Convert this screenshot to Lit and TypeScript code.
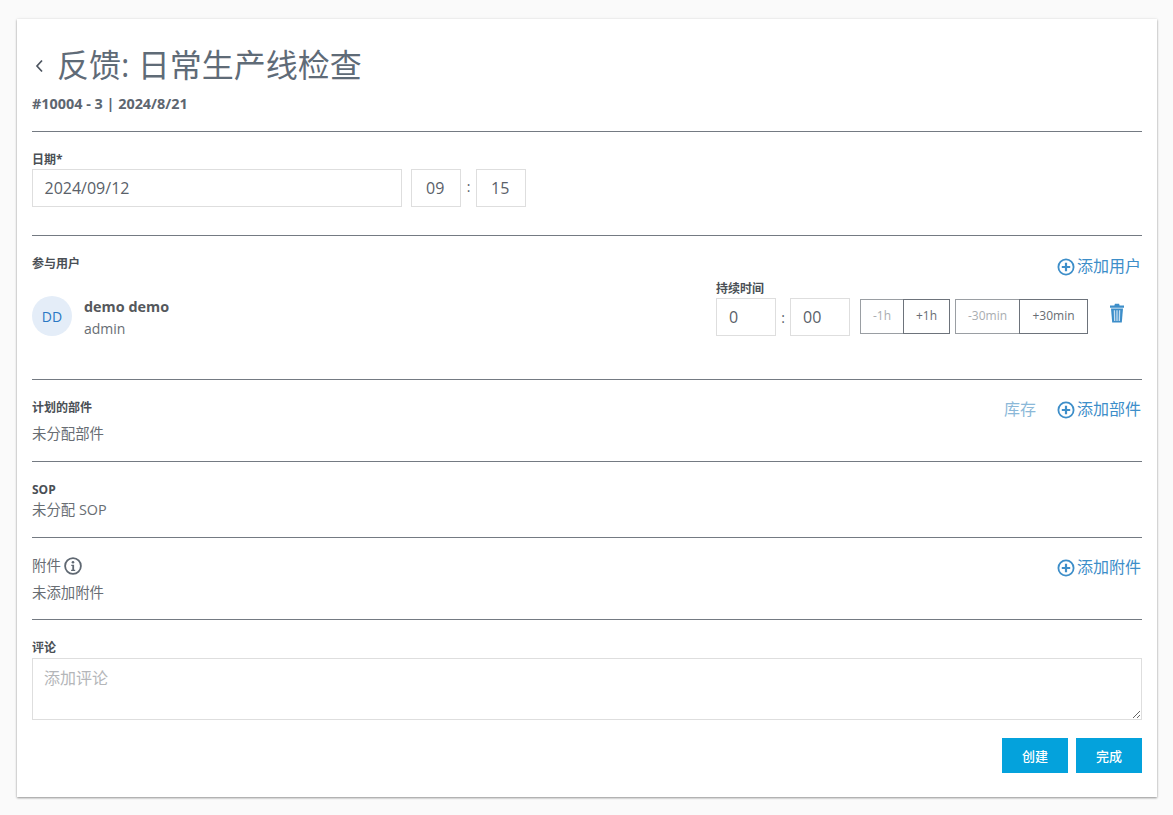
import { LitElement, css, html } from 'lit';
import { customElement } from 'lit/decorators.js';

const plusIcon = html`<svg class="plus" viewBox="0 0 18 18" width="18" height="18">
  <circle cx="9" cy="9" r="7.6" fill="none" stroke="currentColor" stroke-width="1.8"></circle>
  <path d="M9 4.8v8.4M4.8 9h8.4" fill="none" stroke="currentColor" stroke-width="2.2"></path>
</svg>`;

@customElement('app-root')
export class AppRoot extends LitElement {
  private addLink(label: string) {
    return html`<a class="add">${plusIcon}<span>${label}</span></a>`;
  }

  override render() {
    return html`
      <main class="card">
        <header class="head">
          <div class="title-row">
            <svg class="back" viewBox="0 0 10 14" width="10" height="14">
              <path d="M8 1.5 3 7l5 5.5" fill="none" stroke="#4d5560" stroke-width="1.7"></path>
            </svg>
            <h1>反馈: 日常生产线检查</h1>
          </div>
          <div class="sub">#10004 - 3 | 2024/8/21</div>
        </header>

        <section class="date">
          <label class="lbl">日期*</label>
          <div class="date-row">
            <div class="field date-field">2024/09/12</div>
            <div class="field time">09</div>
            <span class="colon">:</span>
            <div class="field time">15</div>
          </div>
        </section>

        <section class="users">
          <div class="users-head">
            <label class="lbl">参与用户</label>
            ${this.addLink('添加用户')}
          </div>
          <div class="user-row">
            <div class="avatar">DD</div>
            <div class="who">
              <div class="name">demo demo</div>
              <div class="role">admin</div>
            </div>
            <div class="duration">
              <label class="lbl">持续时间</label>
              <div class="duration-row">
                <div class="field dur">0</div>
                <span class="colon dur-colon">:</span>
                <div class="field dur">00</div>
                <div class="steps first">
                  <span class="step off s1">-1h</span><span class="step s2">+1h</span>
                </div>
                <div class="steps">
                  <span class="step off s3">-30min</span><span class="step s4">+30min</span>
                </div>
              </div>
            </div>
            <svg class="trash" viewBox="0 0 16 20" width="16" height="20">
              <path d="M1 2.6h14v2.2H1zM5.4 2.6l.5-1.8h4.2l.5 1.8z" fill="#3d8ec9"></path>
              <path d="M2 5.4h12L12.8 19.6H3.2z" fill="#3d8ec9"></path>
              <path d="M5.4 7.2l.3 10.8M8 7.2V18M10.6 7.2l-.3 10.8" stroke="#c6def1" stroke-width="1.3" fill="none"></path>
            </svg>
          </div>
        </section>

        <section class="parts">
          <div class="parts-head">
            <label class="lbl">计划的部件</label>
            <div class="actions">
              <a class="stock">库存</a>
              ${this.addLink('添加部件')}
            </div>
          </div>
          <div class="txt parts-txt">未分配部件</div>
        </section>

        <section class="sop">
          <label class="lbl">SOP</label>
          <div class="txt">未分配 SOP</div>
        </section>

        <section class="files">
          <div class="files-head">
            <span class="files-lbl">附件
              <svg viewBox="0 0 18 18" width="18" height="18">
                <circle cx="9" cy="9" r="7.9" fill="none" stroke="#5f6872" stroke-width="1.8"></circle>
                <circle cx="9" cy="5.2" r="1.3" fill="#5f6872"></circle>
                <path d="M7.3 7.7h2.8v5h1.1v1.2H7.1v-1.2h1.2V8.9h-1z" fill="#5f6872"></path>
              </svg>
            </span>
            ${this.addLink('添加附件')}
          </div>
          <div class="txt files-txt">未添加附件</div>
        </section>

        <section class="comment">
          <label class="lbl">评论</label>
          <textarea placeholder="添加评论"></textarea>
          <div class="buttons">
            <button type="button">创建</button>
            <button type="button">完成</button>
          </div>
        </section>
      </main>
    `;
  }

  static override styles = css`
    :host {
      display: block;
      height: 815px;
      box-sizing: border-box;
      padding: 19px 16px 0 17px;
      background: #fafafa;
      font-family: 'Open Sans', 'Noto Sans CJK SC', sans-serif;
      color: #5a6169;
    }

    * {
      box-sizing: border-box;
    }

    .card {
      height: 778px;
      padding: 0 15px;
      background: #ffffff;
      box-shadow: 0 1px 2px rgba(0, 0, 0, 0.4), 0 0 4px rgba(0, 0, 0, 0.06);
    }

    section,
    .head {
      border-bottom: 1px solid #747a82;
    }

    .head {
      height: 113px;
      padding-top: 23px;
    }

    .title-row {
      display: flex;
      align-items: center;
      height: 46px;
    }

    .back {
      margin: 1px 13px 0 2px;
    }

    h1 {
      margin: 0;
      font-size: 32px;
      line-height: 46px;
      font-weight: 400;
      color: #5f6b77;
    }

    .sub {
      margin-top: 6px;
      font-size: 14.4px;
      line-height: 20px;
      font-weight: 700;
      color: #5d6670;
    }

    .lbl {
      display: block;
      margin: 1px 0 -1px;
      font-size: 12px;
      line-height: 16px;
      font-weight: 700;
      color: #4a4f55;
    }

    .field {
      display: flex;
      align-items: center;
      height: 38px;
      padding-left: 12px;
      border: 1px solid #dedede;
      font-size: 16px;
      color: #5a6169;
    }

    .date {
      height: 104px;
      padding-top: 19px;
    }

    .date-row {
      display: flex;
      margin-top: 2px;
    }

    .date-field {
      width: 370px;
      margin-right: 9px;
      padding-left: 11.5px;
    }

    .time {
      width: 50px;
      padding-left: 14px;
    }

    .colon {
      width: 15px;
      text-align: center;
      font-size: 14px;
      line-height: 36px;
    }

    .users {
      height: 144px;
      padding-top: 19px;
    }

    .users-head,
    .parts-head,
    .files-head {
      display: flex;
      justify-content: space-between;
      align-items: flex-start;
    }

    .add {
      display: flex;
      align-items: center;
      gap: 2px;
      margin-right: 1px;
      font-size: 16px;
      line-height: 22px;
      color: #3d8ec9;
    }

    .plus {
      flex: none;
      margin-top: 2px;
    }

    .files-head .add {
      margin-top: 2px;
    }

    .user-row {
      display: flex;
      margin-top: 3px;
    }

    .avatar {
      display: flex;
      align-items: center;
      justify-content: center;
      width: 40px;
      height: 40px;
      margin-top: 16px;
      border-radius: 50%;
      background: #e4edf8;
      color: #2a78c4;
      font-size: 14px;
    }

    .who {
      flex: none;
      width: 632px;
      margin-left: 12px;
      padding-top: 17px;
    }

    .name {
      font-size: 14.4px;
      line-height: 20px;
      font-weight: 700;
      color: #55585c;
    }

    .role {
      margin-top: 2px;
      font-size: 14px;
      line-height: 20px;
      color: #686d73;
    }

    .duration {
      width: 372px;
    }

    .duration-row {
      display: flex;
      align-items: flex-start;
      margin-top: 2px;
    }

    .dur {
      width: 60px;
      padding-left: 12px;
    }

    .dur-colon {
      width: 14px;
      line-height: 40px;
    }

    .steps {
      display: flex;
      margin: 1px 0 0 5px;
    }

    .steps.first {
      margin-left: 10px;
    }

    .step {
      display: flex;
      align-items: center;
      justify-content: center;
      height: 35px;
      padding-bottom: 2px;
      border: 1px solid #6d737b;
      font-size: 12px;
      color: #686d73;
    }

    .step.off {
      border-color: #9a9ea3;
      border-right: 0;
      color: #a9adb1;
    }

    .s1 { width: 43px; }
    .s2 { width: 47px; }
    .s3 { width: 64px; }
    .s4 { width: 69px; }

    .trash {
      margin: 23px 0 0 21px;
    }

    .parts {
      height: 82px;
      padding-top: 19px;
    }

    .actions {
      display: flex;
      gap: 21px;
      margin-top: -1px;
    }

    .stock {
      font-size: 16px;
      line-height: 22px;
      color: #8bb8d8;
    }

    .txt {
      font-size: 14.4px;
      line-height: 20px;
      color: #686d73;
    }

    .parts-txt {
      margin-top: 4px;
    }

    .sop {
      height: 76px;
      padding-top: 19px;
    }

    .sop .txt {
      margin-top: 3px;
    }

    .files {
      height: 82px;
      padding-top: 16px;
    }

    .files-lbl {
      display: flex;
      align-items: center;
      gap: 3px;
      font-size: 14.4px;
      line-height: 24px;
      color: #686d73;
    }

    .files-txt {
      margin-top: 5px;
    }

    .comment {
      border-bottom: 0;
      padding-top: 19px;
    }

    textarea {
      display: block;
      width: 100%;
      height: 62px;
      margin: 3px 0 0;
      padding: 6px 11px;
      border: 1px solid #dedede;
      border-radius: 0;
      outline: none;
      font: inherit;
      font-size: 16px;
      color: #5a6169;
    }

    textarea::placeholder {
      color: #b4b6b9;
      opacity: 1;
    }

    .buttons {
      display: flex;
      justify-content: flex-end;
      gap: 8px;
      margin-top: 18px;
    }

    button {
      width: 66px;
      height: 35px;
      border: 0;
      background: #04a2dc;
      color: #ffffff;
      font: inherit;
      font-size: 13px;
      font-weight: 500;
    }
  `;
}
